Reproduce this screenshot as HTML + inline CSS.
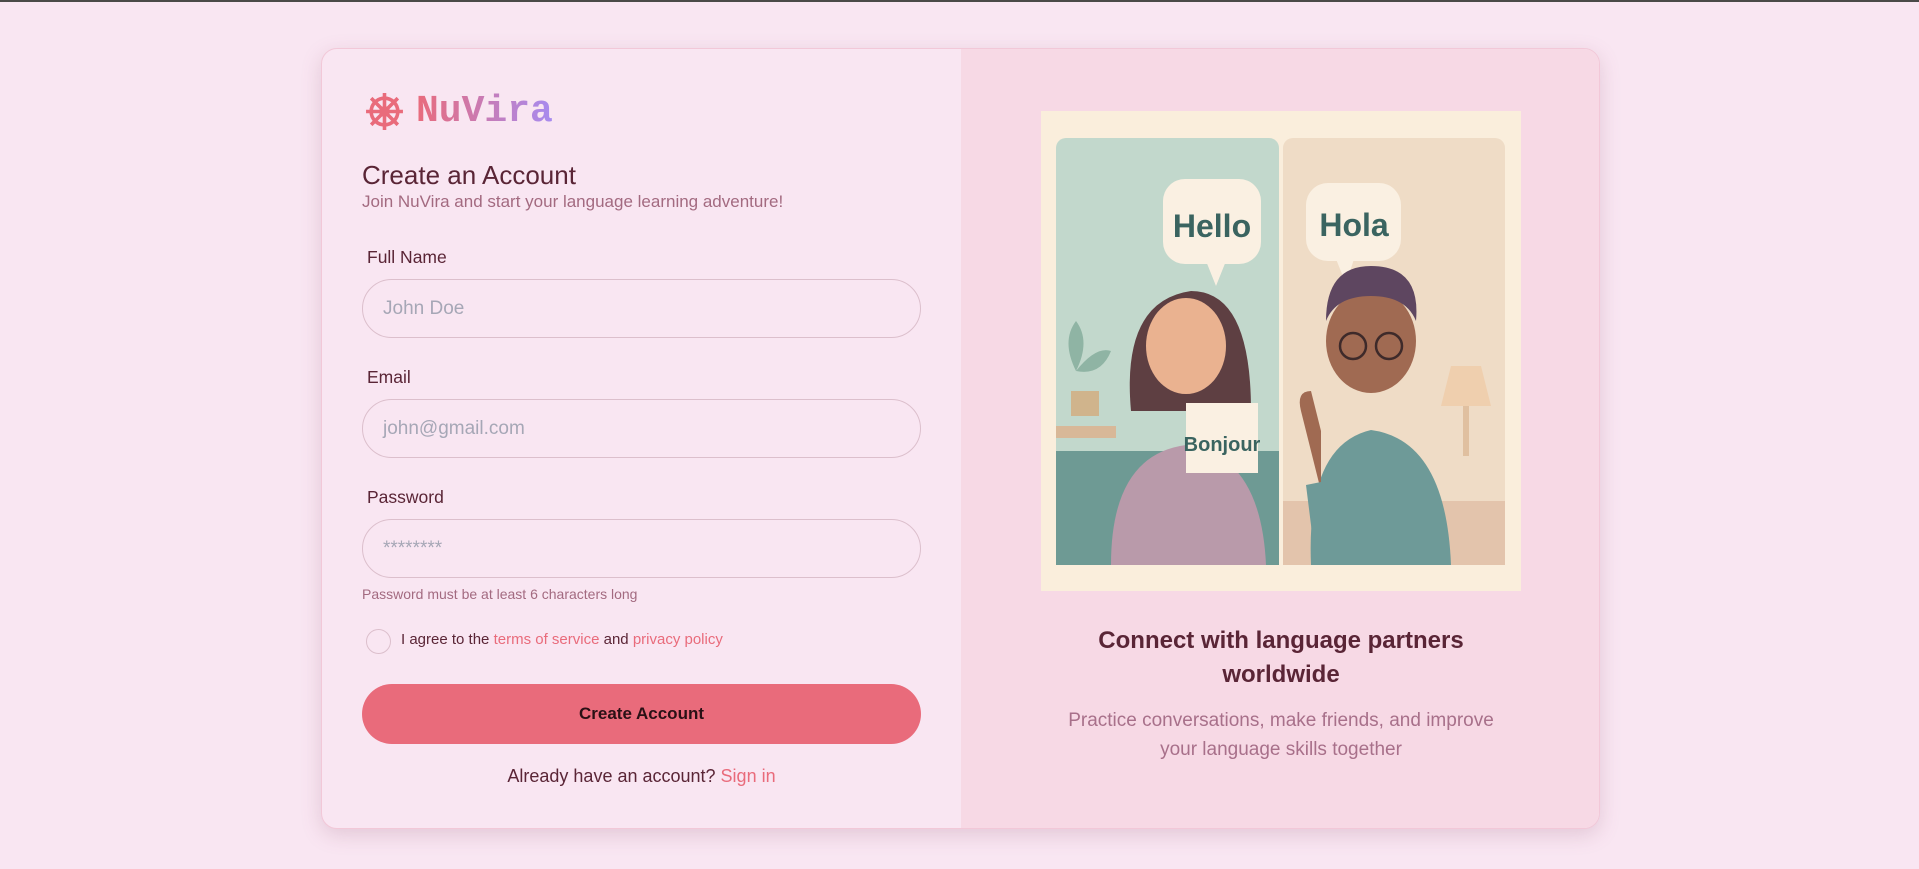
<!DOCTYPE html>
<html><head><meta charset="utf-8"><style>
*{box-sizing:border-box;margin:0;padding:0}
body{width:1919px;height:869px;background:#f9e6f2;font-family:"Liberation Sans",sans-serif;position:relative;overflow:hidden;border-top:2px solid #4a4a48}
.card{position:absolute;left:321px;top:46px;width:1279px;height:781px;border-radius:16px;background:#f9e6f2;box-shadow:0 6px 20px rgba(150,90,120,.22);overflow:hidden;border:1px solid #f2c8d8}
.right{position:absolute;left:639px;top:0;width:640px;height:100%;background:#f7d9e5}
.abs{position:absolute}
.logo{font-family:"Liberation Mono",monospace;font-weight:bold;font-size:38px;background:linear-gradient(90deg,#e96b7b,#a78bf0);-webkit-background-clip:text;color:transparent;left:94px;top:41px}
h1{position:absolute;left:40px;top:111px;font-size:26px;font-weight:normal;color:#5a2536}
.sub{left:40px;top:143px;font-size:17px;color:#a36a80}
.lab{left:45px;font-size:17.5px;color:#5a2536}
.inp{left:40px;width:559px;height:59px;border:1px solid #dcbfcc;border-radius:30px;padding-left:20px;line-height:57px;font-size:19px;color:#a6a7b6}
.hint{left:40px;top:537px;font-size:14px;color:#a36a80}
.cb{left:44px;top:580px;width:25px;height:25px;border:1px solid #dcbfcc;border-radius:50%}
.agree{left:79px;top:582px;font-size:15px;color:#5a2536}
.pk{color:#e96b7b}
.btn{left:40px;top:635px;width:559px;height:60px;border-radius:30px;background:#e96b7b;text-align:center;line-height:60px;font-weight:bold;font-size:17px;color:#2a1015}
.al{left:0;width:639px;text-align:center;top:717px;font-size:18px;color:#5a2536}
.rh{left:0;width:640px;text-align:center;top:575px;font-size:24px;font-weight:bold;color:#5a2536;line-height:34px}
.rp{left:0;width:640px;text-align:center;top:657px;font-size:19px;color:#a8708a;line-height:29px}
</style></head><body>
<div class="card">
<svg class="abs" style="left:42px;top:42px" width="41" height="41" viewBox="0 0 40 40" fill="none" stroke="#e96b7b" stroke-width="3.5"><circle cx="20" cy="20" r="13"/><circle cx="20" cy="20" r="3.5" fill="#e96b7b"/><path d="M20 2v36M2 20h36M7 7l26 26M33 7L7 33"/></svg>
<div class="abs logo">NuVira</div>
<h1>Create an Account</h1>
<div class="abs sub">Join NuVira and start your language learning adventure!</div>
<div class="abs lab" style="top:198px">Full Name</div>
<div class="abs inp" style="top:230px">John Doe</div>
<div class="abs lab" style="top:318px">Email</div>
<div class="abs inp" style="top:350px">john@gmail.com</div>
<div class="abs lab" style="top:438px">Password</div>
<div class="abs inp" style="top:470px">********</div>
<div class="abs hint">Password must be at least 6 characters long</div>
<div class="abs cb"></div>
<div class="abs agree">I agree to the <span class="pk">terms of service</span> and <span class="pk">privacy policy</span></div>
<div class="abs btn">Create Account</div>
<div class="abs al">Already have an account? <span class="pk">Sign in</span></div>
<div class="right">
<svg class="abs" style="left:80px;top:62px" width="480" height="480" viewBox="0 0 480 480">
<rect width="480" height="480" fill="#faeedc"/>
<rect x="15" y="27" width="223" height="427" rx="10" fill="#c2d8cc"/>
<rect x="15" y="340" width="223" height="114" fill="#6e9a94"/>
<rect x="15" y="315" width="60" height="12" fill="#d8b898"/>
<rect x="242" y="27" width="222" height="427" rx="10" fill="#efdcc6"/>
<rect x="242" y="390" width="222" height="64" fill="#e3c4ac"/>
<path d="M35 260q-15-30 0-50q15 20 0 50M35 260q20-25 35-20q-10 25-35 20" fill="#8fb4a4"/>
<rect x="30" y="280" width="28" height="25" fill="#d0b48c"/>
<path d="M90 300q-10-110 60-120q60 0 60 120z" fill="#5e3f42"/>
<ellipse cx="145" cy="235" rx="40" ry="48" fill="#eab290"/>
<path d="M70 454q0-110 75-120q75 10 80 120z" fill="#b99aaa"/>
<rect x="145" y="292" width="72" height="70" fill="#faf0e2"/>
<text x="181" y="340" text-anchor="middle" font-family="Liberation Sans" font-weight="bold" font-size="20" fill="#3a6460">Bonjour</text>
<rect x="122" y="68" width="98" height="85" rx="22" fill="#faf0e2"/>
<path d="M165 150l10 25 10-25z" fill="#faf0e2"/>
<text x="171" y="126" text-anchor="middle" font-family="Liberation Sans" font-weight="bold" font-size="32" fill="#3a6460">Hello</text>
<rect x="265" y="72" width="95" height="78" rx="22" fill="#faf0e2"/>
<path d="M295 148l10 25 8-25z" fill="#faf0e2"/>
<text x="313" y="125" text-anchor="middle" font-family="Liberation Sans" font-weight="bold" font-size="32" fill="#3a6460">Hola</text>
<path d="M410 255h30l10 40h-50z" fill="#efcfae"/><rect x="422" y="295" width="6" height="50" fill="#e0c0a0"/>
<ellipse cx="330" cy="230" rx="45" ry="52" fill="#a06a52"/>
<path d="M285 210q0-55 45-55q50 0 45 55q-10-25-45-25q-35 0-45 25z" fill="#5e4660"/>
<circle cx="312" cy="235" r="13" fill="none" stroke="#3e2a2a" stroke-width="2.5"/><circle cx="348" cy="235" r="13" fill="none" stroke="#3e2a2a" stroke-width="2.5"/>
<path d="M270 454q-5-120 60-135q75 10 80 135z" fill="#6e9a98"/>
<path d="M280 380l-20-80q-5-20 10-20l10 40z" fill="#a06a52"/>
<path d="M275 454l-10-80 25-5 15 85z" fill="#6e9a98"/>
</svg>
<div class="abs rh">Connect with language partners<br>worldwide</div>
<div class="abs rp">Practice conversations, make friends, and improve<br>your language skills together</div>
</div>
</div>
</body></html>
